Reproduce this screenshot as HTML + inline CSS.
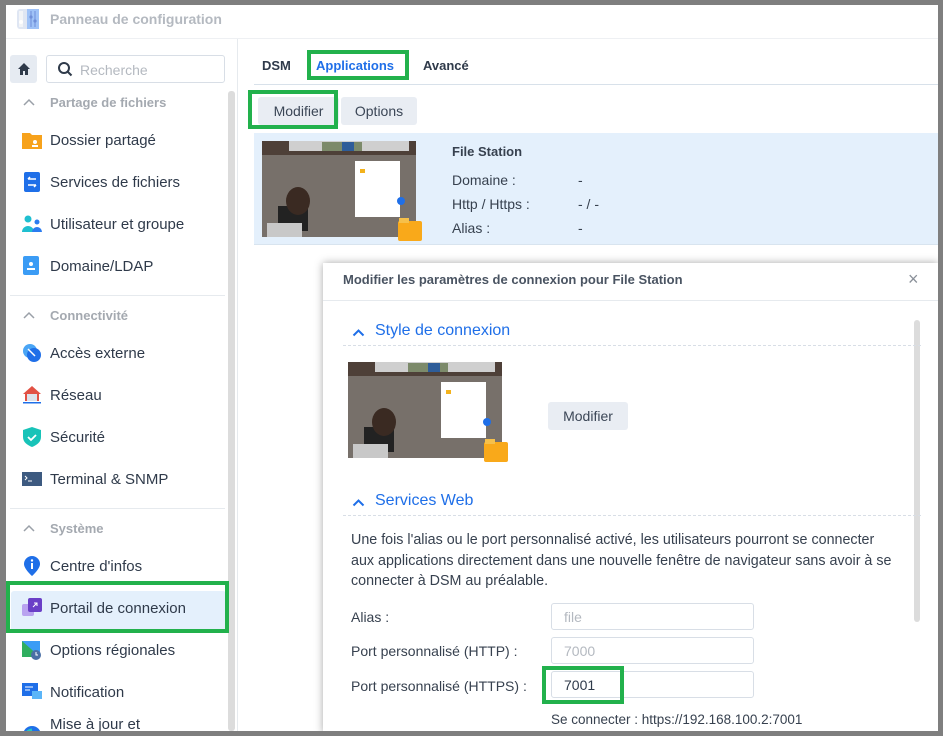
<!DOCTYPE html>
<html><head><meta charset="utf-8"><style>
*{box-sizing:border-box;margin:0;padding:0}
body{width:943px;height:736px;overflow:hidden;background:#7f7f7f;font-family:"Liberation Sans","DejaVu Sans",sans-serif;color:#2f3a4a;position:relative}
.win{position:absolute;left:6px;top:5px;width:932px;height:726px;background:#fff;overflow:hidden}
.abs{position:absolute}
.title{left:44px;top:6px;font-size:14px;font-weight:bold;color:#b4b9c0}
.hr{position:absolute;height:1px;background:#e6eaee}
.side-item{position:absolute;left:16px;font-size:15px;color:#2f3a4a;display:flex;align-items:center}
.side-item .ic{width:20px;height:20px;margin-right:8px;display:inline-block}
.sec{position:absolute;left:44px;font-size:13px;font-weight:bold;color:#a4a9b0}
.chev{position:absolute;left:-27px;top:3px}
.green{position:absolute;border:4px solid #22b14c}
.btn{position:absolute;background:#e9edf3;border-radius:3px;font-size:14px;color:#3b4656;text-align:center}
.lbl{position:absolute;font-size:14px;color:#37414f}
.inp{position:absolute;border:1px solid #d8dee6;border-radius:3px;height:27px;width:203px;font-size:14px;padding:5px 12px;color:#b4b9c0}
</style></head><body>
<div class="win">
 <svg class="abs" style="left:10px;top:1px" width="24" height="24"><rect x="1" y="3" width="22" height="20" rx="3" fill="#dfe6f3"/><rect x="11" y="3" width="12" height="20" fill="#9fc2f7"/><rect x="3" y="5" width="4" height="16" fill="#f2f4f7"/><circle cx="5" cy="16" r="2" fill="#fff"/><line x1="15" y1="5" x2="15" y2="21" stroke="#6f8fd8"/><line x1="19" y1="5" x2="19" y2="21" stroke="#6f8fd8"/><circle cx="15" cy="11" r="1.6" fill="#6f8fd8"/><circle cx="19" cy="15" r="1.6" fill="#6f8fd8"/></svg>
 <div class="abs title">Panneau de configuration</div>
 <div class="hr" style="left:0;top:33px;width:932px;background:#eef0f3"></div>
 <div class="abs" style="left:231px;top:34px;width:1px;height:700px;background:#e6eaee"></div>
 <div class="abs" style="left:4px;top:50px;width:27px;height:28px;background:#e6ebf2;border-radius:3px"></div>
 <svg class="abs" style="left:11px;top:57px" width="14" height="14"><path d="M7 1L1 7h2v6h3V9h2v4h3V7h2z" fill="#2f3a4a"/></svg>
 <div class="abs" style="left:40px;top:50px;width:179px;height:28px;border:1px solid #d8dee6;border-radius:3px"></div>
 <svg class="abs" style="left:51px;top:56px" width="16" height="16"><circle cx="7" cy="7" r="5" fill="none" stroke="#2f3a4a" stroke-width="2"/><line x1="10.5" y1="10.5" x2="14.5" y2="14.5" stroke="#2f3a4a" stroke-width="2"/></svg>
 <div class="abs" style="left:74px;top:57px;font-size:14px;color:#b4b9c0">Recherche</div>
 <div class="abs" style="left:222px;top:86px;width:7px;height:640px;background:#dcdcdc;border-radius:3px"></div>

 <div class="sec" style="top:90px"><svg class="chev" width="12" height="8"><path d="M1 7l5-5 5 5" stroke="#9aa0a8" stroke-width="1.5" fill="none"/></svg>Partage de fichiers</div>
 <div class="side-item" style="top:125px"><svg class="ic" viewBox="0 0 20 20"><path d="M0 3h8l2 2h10v14H0z" fill="#f7a21b"/><circle cx="13" cy="12" r="2" fill="#fff"/><rect x="10" y="15" width="6" height="2" fill="#fff"/></svg>Dossier partagé</div>
 <div class="side-item" style="top:167px"><svg class="ic" viewBox="0 0 20 20"><rect x="2" y="0" width="16" height="20" rx="2" fill="#1f6fe8"/><path d="M6 7h8M6 7l2-2M14 13H6M14 13l-2 2" stroke="#fff" stroke-width="1.5" fill="none"/></svg>Services de fichiers</div>
 <div class="side-item" style="top:209px"><svg class="ic" viewBox="0 0 20 20"><circle cx="6" cy="5" r="3.5" fill="#1fbfd0"/><path d="M0 18a6 6 0 0 1 12 0z" fill="#1fbfd0"/><circle cx="15" cy="8" r="2.5" fill="#2b7cf0"/><path d="M10 18a5 5 0 0 1 10 0z" fill="#2b7cf0"/></svg>Utilisateur et groupe</div>
 <div class="side-item" style="top:251px"><svg class="ic" viewBox="0 0 20 20"><rect x="1" y="0" width="16" height="19" rx="2" fill="#3b9cf5"/><circle cx="9" cy="8" r="2" fill="#fff"/><rect x="5" y="12" width="8" height="2" fill="#fff"/></svg>Domaine/LDAP</div>
 <div class="hr" style="left:4px;top:290px;width:215px"></div>
 <div class="sec" style="top:303px"><svg class="chev" width="12" height="8"><path d="M1 7l5-5 5 5" stroke="#9aa0a8" stroke-width="1.5" fill="none"/></svg>Connectivité</div>
 <div class="side-item" style="top:338px"><svg class="ic" viewBox="0 0 20 20"><circle cx="8" cy="8" r="7" fill="#4aa5f5"/><circle cx="12" cy="12" r="7" fill="#1f6fe8"/><line x1="6" y1="6" x2="13" y2="13" stroke="#fff" stroke-width="1.5"/></svg>Accès externe</div>
 <div class="side-item" style="top:380px"><svg class="ic" viewBox="0 0 20 20"><path d="M10 1L1 9h2v7h14V9h2z" fill="#e25144"/><rect x="5" y="9" width="10" height="7" fill="#dce2ea"/><rect x="1" y="17" width="18" height="1.5" fill="#1f6fe8"/></svg>Réseau</div>
 <div class="side-item" style="top:422px"><svg class="ic" viewBox="0 0 20 20"><path d="M10 0l9 3v7c0 5-4 8-9 10C5 18 1 15 1 10V3z" fill="#18c3b8"/><path d="M6 10l3 3 5-5" stroke="#fff" stroke-width="1.8" fill="none"/></svg>Sécurité</div>
 <div class="side-item" style="top:464px"><svg class="ic" viewBox="0 0 20 20"><rect x="0" y="3" width="20" height="14" fill="#3d5a80"/><path d="M3 7l2 2-2 2M6 12h4" stroke="#fff" fill="none"/></svg>Terminal &amp; SNMP</div>
 <div class="hr" style="left:4px;top:503px;width:215px"></div>
 <div class="sec" style="top:516px"><svg class="chev" width="12" height="8"><path d="M1 7l5-5 5 5" stroke="#9aa0a8" stroke-width="1.5" fill="none"/></svg>Système</div>
 <div class="side-item" style="top:551px"><svg class="ic" viewBox="0 0 20 20"><path d="M10 0a8 8 0 0 1 8 8c0 5-8 12-8 12S2 13 2 8a8 8 0 0 1 8-8z" fill="#1f6fe8"/><rect x="9" y="7" width="2" height="6" fill="#fff"/><circle cx="10" cy="4.5" r="1.2" fill="#fff"/></svg>Centre d'infos</div>
 <div class="abs" style="left:5px;top:586px;width:215px;height:42px;background:#e4f0fc;border-radius:3px"></div>
 <div class="side-item" style="top:593px"><svg class="ic" viewBox="0 0 20 20"><rect x="0" y="6" width="12" height="12" rx="2" fill="#b9a3f0"/><rect x="6" y="0" width="14" height="14" rx="2" fill="#6a3fc7"/><path d="M11 9l4-4M12 5h3v3" stroke="#fff" fill="none"/></svg>Portail de connexion</div>
 <div class="side-item" style="top:635px"><svg class="ic" viewBox="0 0 20 20"><rect x="0" y="1" width="18" height="16" fill="#2fae5f"/><path d="M0 1l18 16V1z" fill="#3b9cf5"/><circle cx="14" cy="15" r="5" fill="#4a6fa5"/><path d="M14 12v3h2" stroke="#fff" fill="none"/></svg>Options régionales</div>
 <div class="side-item" style="top:677px"><svg class="ic" viewBox="0 0 20 20"><rect x="0" y="1" width="16" height="13" fill="#1f6fe8"/><rect x="10" y="9" width="10" height="8" fill="#5bb5f8"/><path d="M3 5h8M3 8h5" stroke="#fff"/></svg>Notification</div>
 <div class="abs" style="left:44px;top:711px;font-size:15px;color:#2f3a4a">Mise à jour et</div>
 <svg class="abs" style="left:16px;top:720px" width="20" height="20" viewBox="0 0 20 20"><circle cx="10" cy="10" r="9" fill="#1f6fe8"/><path d="M3 14a8 8 0 0 1 7-9" stroke="#25c7c0" stroke-width="3" fill="none"/></svg>
 <div class="green" style="left:0;top:576px;width:223px;height:52px"></div>

 <div class="abs" style="left:256px;top:53px;font-size:13px;font-weight:bold;color:#2f3a4a">DSM</div>
 <div class="abs" style="left:310px;top:53px;font-size:13px;font-weight:bold;color:#1f6fe8">Applications</div>
 <div class="abs" style="left:417px;top:53px;font-size:13px;font-weight:bold;color:#2f3a4a">Avancé</div>
 <div class="hr" style="left:248px;top:79px;width:684px;background:#d8e1ea"></div>
 <div class="green" style="left:301px;top:45px;width:102px;height:30px"></div>
 <div class="btn" style="left:252px;top:92px;width:81px;height:28px;line-height:28px">Modifier</div>
 <div class="btn" style="left:335px;top:92px;width:76px;height:28px;line-height:28px">Options</div>
 <div class="green" style="left:242px;top:85px;width:90px;height:39px"></div>

 <div class="abs" style="left:248px;top:128px;width:684px;height:112px;background:#e4f0fc;border-bottom:1px solid #d8e4ef"></div>
 <svg class="abs" style="left:256px;top:136px" width="162" height="106" viewBox="0 0 162 106">
  <rect width="154" height="96" fill="#77706a"/><rect width="154" height="14" fill="#4e4038"/>
  <rect x="27" y="0" width="120" height="10" fill="#cfcfcf"/><rect x="60" y="1" width="40" height="9" fill="#7c8a6a"/><rect x="80" y="1" width="12" height="9" fill="#2e5d99"/>
  <rect x="93" y="20" width="45" height="56" fill="#fff"/><rect x="98" y="28" width="5" height="4" fill="#f3b21c"/>
  <circle cx="139" cy="60" r="4" fill="#1f6fe8"/>
  <rect x="16" y="65" width="30" height="25" fill="#222"/><ellipse cx="36" cy="60" rx="12" ry="14" fill="#3a2a22"/><rect x="5" y="82" width="35" height="14" fill="#c8c8c8"/>
  <rect x="136" y="80" width="24" height="20" rx="2" fill="#f9a91a"/><rect x="137" y="77" width="10" height="5" fill="#f6c04a"/>
 </svg>
 <div class="abs" style="left:446px;top:139px;font-size:13px;font-weight:bold;color:#37414f">File Station</div>
 <div class="lbl" style="left:446px;top:167px">Domaine :</div><div class="lbl" style="left:572px;top:167px">-</div>
 <div class="lbl" style="left:446px;top:191px">Http / Https :</div><div class="lbl" style="left:572px;top:191px">- / -</div>
 <div class="lbl" style="left:446px;top:215px">Alias :</div><div class="lbl" style="left:572px;top:215px">-</div>

 <div class="abs" style="left:317px;top:258px;width:615px;height:470px;background:#fff;box-shadow:0 0 8px rgba(0,0,0,.35)">
  <div class="abs" style="left:20px;top:9px;font-size:13px;font-weight:bold;color:#4a5462">Modifier les paramètres de connexion pour File Station</div>
  <div class="abs" style="left:585px;top:6px;font-size:18px;color:#8a9099">×</div>
  <div class="hr" style="left:0;top:37px;width:615px"></div>
  <div class="abs" style="left:591px;top:57px;width:6px;height:302px;background:#dcdcdc;border-radius:3px"></div>
  <svg class="abs" style="left:29px;top:65px" width="13" height="9"><path d="M1.5 7.5l5-5 5 5" stroke="#1f6fe8" stroke-width="2" fill="none"/></svg>
  <div class="abs" style="left:52px;top:59px;font-size:16px;color:#1f6fe8">Style de connexion</div>
  <div class="abs" style="left:20px;top:82px;width:578px;border-top:1px dashed #d8dee6"></div>
  <svg class="abs" style="left:25px;top:99px" width="162" height="106" viewBox="0 0 162 106">
   <rect width="154" height="96" fill="#77706a"/><rect width="154" height="14" fill="#4e4038"/>
   <rect x="27" y="0" width="120" height="10" fill="#cfcfcf"/><rect x="60" y="1" width="40" height="9" fill="#7c8a6a"/><rect x="80" y="1" width="12" height="9" fill="#2e5d99"/>
   <rect x="93" y="20" width="45" height="56" fill="#fff"/><rect x="98" y="28" width="5" height="4" fill="#f3b21c"/>
   <circle cx="139" cy="60" r="4" fill="#1f6fe8"/>
   <rect x="16" y="65" width="30" height="25" fill="#222"/><ellipse cx="36" cy="60" rx="12" ry="14" fill="#3a2a22"/><rect x="5" y="82" width="35" height="14" fill="#c8c8c8"/>
   <rect x="136" y="80" width="24" height="20" rx="2" fill="#f9a91a"/><rect x="137" y="77" width="10" height="5" fill="#f6c04a"/>
  </svg>
  <div class="btn" style="left:225px;top:139px;width:80px;height:28px;line-height:28px">Modifier</div>
  <svg class="abs" style="left:29px;top:235px" width="13" height="9"><path d="M1.5 7.5l5-5 5 5" stroke="#1f6fe8" stroke-width="2" fill="none"/></svg>
  <div class="abs" style="left:52px;top:229px;font-size:16px;color:#1f6fe8">Services Web</div>
  <div class="abs" style="left:20px;top:252px;width:578px;border-top:1px dashed #d8dee6"></div>
  <div class="abs" style="left:28px;top:267px;font-size:14.3px;line-height:20.5px;color:#37414f;white-space:nowrap">Une fois l'alias ou le port personnalisé activé, les utilisateurs pourront se connecter<br>aux applications directement dans une nouvelle fenêtre de navigateur sans avoir à se<br>connecter à DSM au préalable.</div>
  <div class="lbl" style="left:28px;top:346px">Alias :</div>
  <div class="inp" style="left:228px;top:340px">file</div>
  <div class="lbl" style="left:28px;top:380px">Port personnalisé (HTTP) :</div>
  <div class="inp" style="left:228px;top:374px">7000</div>
  <div class="lbl" style="left:28px;top:415px">Port personnalisé (HTTPS) :</div>
  <div class="inp" style="left:228px;top:408px;color:#2f3a4a">7001</div>
  <div class="green" style="left:219px;top:403px;width:82px;height:38px"></div>
  <div class="lbl" style="left:228px;top:449px;font-size:13.5px">Se connecter : https://192.168.100.2:7001</div>
 </div>
</div>
</body></html>
